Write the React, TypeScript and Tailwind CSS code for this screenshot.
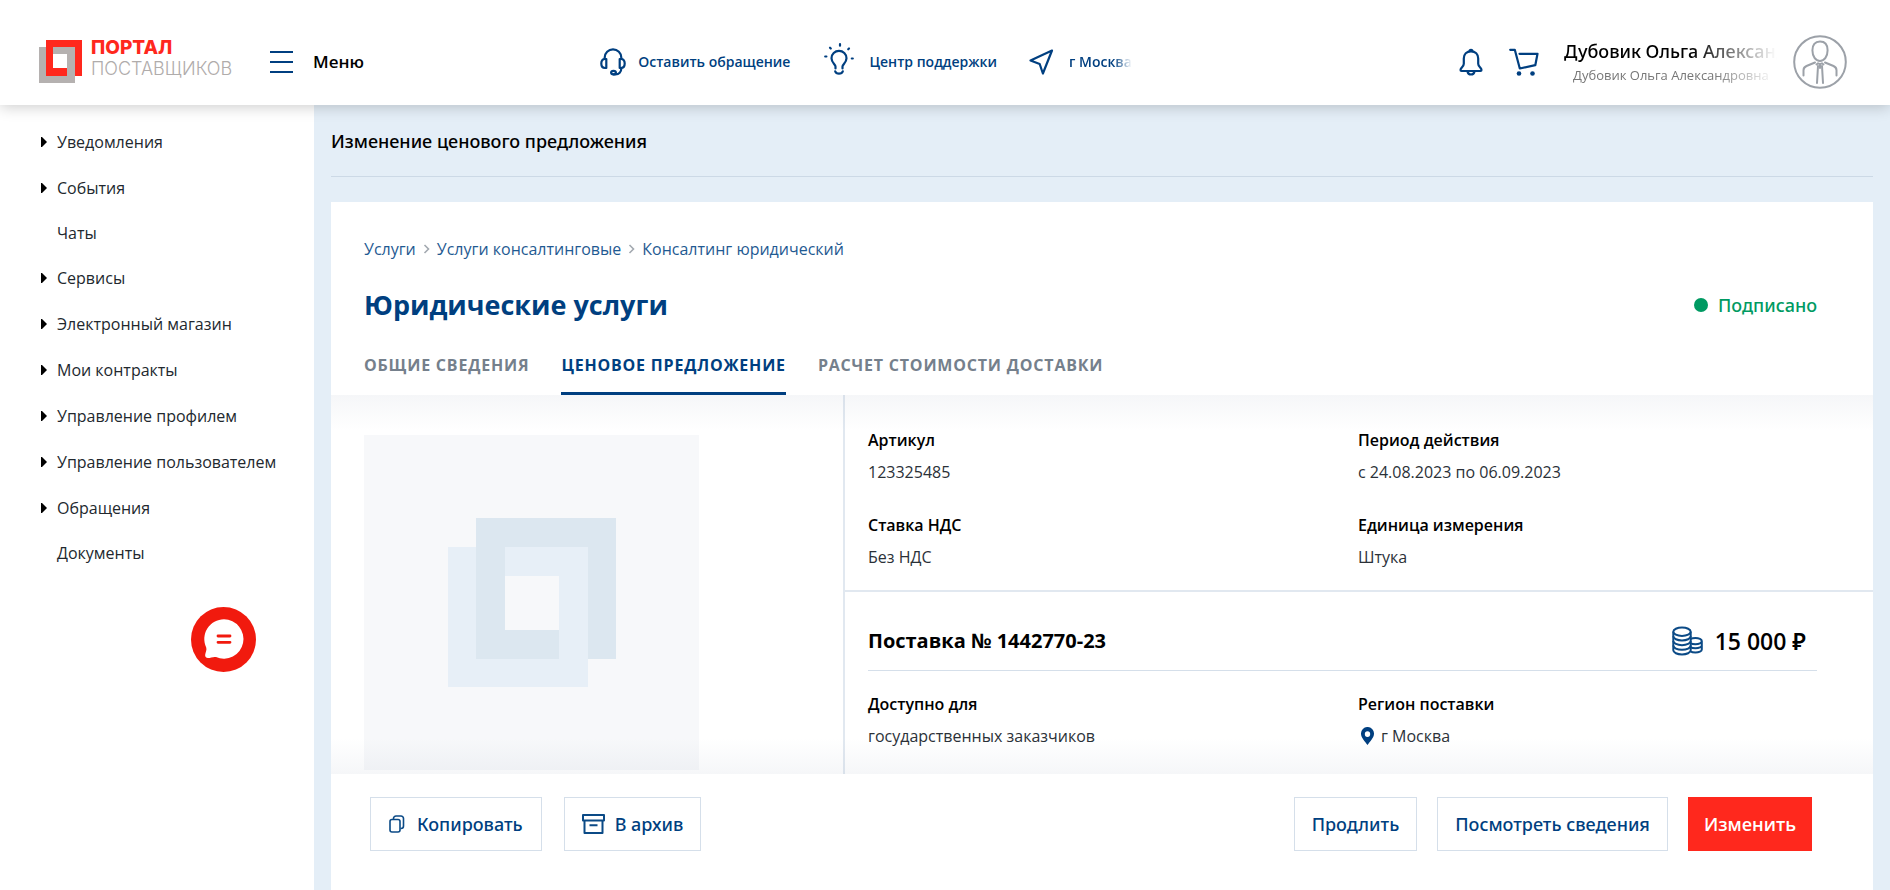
import React from "react";

const menuItems = [
  { label: "Уведомления", expandable: true },
  { label: "События", expandable: true },
  { label: "Чаты", expandable: false },
  { label: "Сервисы", expandable: true },
  { label: "Электронный магазин", expandable: true },
  { label: "Мои контракты", expandable: true },
  { label: "Управление профилем", expandable: true },
  { label: "Управление пользователем", expandable: true },
  { label: "Обращения", expandable: true },
  { label: "Документы", expandable: false },
];

function LogoMark() {
  return (
    <svg width="43" height="43" viewBox="0 0 43 43" aria-hidden="true" className="shrink-0">
      <path fill="#b5b1b0" fillRule="evenodd" d="M0 7h36v36H0zM14 14v14h14V14z" />
      <path fill="#ff281d" d="M7 0h36v36h-7V7H14v21h14v8H7z" />
    </svg>
  );
}

function HeadsetIcon() {
  return (
    <svg width="26" height="28" viewBox="0 0 26 28" fill="none" stroke="#003f80" strokeWidth="2.2" strokeLinecap="round" aria-hidden="true">
      <path d="M4.700 11V9.500a8.300 8.200 0 0 1 16.600 0V11" />
      <path d="M6.300 11v9H5c-2.200 0-3.700-1.700-3.700-4.400S2.800 11 5 11zM19.700 11v9H21c2.200 0 3.700-1.700 3.700-4.400S23.200 11 21 11z" strokeLinejoin="round" />
      <path d="M21.300 20.500c0 3.300-2.300 5.700-5.800 5.900h-2" />
      <ellipse cx="13.500" cy="24.600" rx="2.400" ry="1.800" />
    </svg>
  );
}

function BulbIcon() {
  return (
    <svg width="30" height="32" viewBox="0 0 30 32" fill="none" stroke="#003f80" strokeWidth="2.2" strokeLinecap="round" className="mb-1.5" aria-hidden="true">
      <path d="M11.500 25.500v-2c0-2-4-3.800-4-8.300a7.500 7.300 0 0 1 15 0c0 4.500-4 6.300-4 8.300v2" />
      <path d="M11.200 28.300c.6 1.700 2 2.300 3.800 2.300s3.200-.6 3.800-2.300" />
      <path d="M16 1.200v1.500M6 4.700l.8.800M25 5.500l-.8.800M1.200 13.500h1.200M27.800 15.500h1" />
    </svg>
  );
}

function LocationIcon() {
  return (
    <svg width="25" height="26" viewBox="0 0 25 26" fill="none" stroke="#003f80" strokeWidth="2.2" strokeLinejoin="round" aria-hidden="true">
      <path d="M23 1.500L1.500 11.500l9.200 3.500 3.200 9.500z" />
    </svg>
  );
}

function BellIcon() {
  return (
    <svg width="24" height="28" viewBox="0 0 24 28" fill="none" stroke="#003f80" strokeWidth="2.2" strokeLinejoin="round" aria-hidden="true">
      <path d="M12 3.300c-4.300 0-7.200 3-7.200 7.200v5.300c0 3-3.300 3.700-3.300 6.200 0 .6.300 1 1 1h19c.7 0 1-.4 1-1 0-2.500-3.300-3.200-3.300-6.200v-5.300c0-4.200-2.900-7.200-7.200-7.200z" />
      <path d="M10.500 3.300a1.500 1.500 0 0 1 3 0M8.500 23.500c.4 2 1.700 3 3.500 3s3.100-1 3.500-3" />
    </svg>
  );
}

function CartIcon() {
  return (
    <svg width="30" height="28" viewBox="0 0 30 28" fill="none" stroke="#003f80" strokeWidth="2.2" strokeLinecap="round" strokeLinejoin="round" aria-hidden="true">
      <path d="M1.200 1.800h4.600l5 18.700 15.500-3.300 2.200-11.400H10.500" />
      <circle cx="10" cy="25.500" r="2.300" fill="#003f80" stroke="none" />
      <circle cx="23.500" cy="25.500" r="2.300" fill="#003f80" stroke="none" />
    </svg>
  );
}

function AvatarIcon() {
  return (
    <svg width="54" height="54" viewBox="0 0 54 54" fill="none" stroke="#9ca1a8" strokeWidth="2" strokeLinecap="round" aria-hidden="true">
      <circle cx="27" cy="27" r="25.800" />
      <path d="M27 6.500c5 0 7.600 3.600 7.600 8.800 0 6-3.200 10.600-7.600 10.600s-7.600-4.600-7.600-10.600c0-5.200 2.600-8.800 7.600-8.800z" />
      <path d="M22 27.500l-8.500 3.500c-2 .9-3 2-3 4.300v5.200M32 27.500l8.500 3.500c2 .9 3 2 3 4.300v5.200" />
      <path d="M23.500 29.500l1.500-1.200 2 .9 2-.9 1.500 1.200M25 31l-1 17M29 31l1 17M27 30v3" />
    </svg>
  );
}

function CoinsIcon() {
  return (
    <svg width="31" height="30" viewBox="0 0 31 30" fill="none" stroke="#0b4a86" strokeWidth="2" aria-hidden="true">
      <ellipse cx="10" cy="5.700" rx="8.700" ry="4.200" />
      <path d="M1.300 5.700v18.600c0 2.300 3.900 4.200 8.700 4.200s8.700-1.900 8.700-4.200V5.700" />
      <path d="M1.300 10.300c0 2.300 3.900 4.200 8.700 4.200s8.700-1.900 8.700-4.200M1.300 15c0 2.300 3.900 4.200 8.700 4.200s8.700-1.900 8.700-4.200M1.300 19.600c0 2.300 3.900 4.200 8.700 4.200s8.700-1.900 8.700-4.200" />
      <path d="M18.700 13c1-.6 2.500-1 4.800-1 3.500 0 6.300 1.400 6.300 3.100s-2.800 3.100-6.300 3.100c-2.300 0-4-.4-4.800-1M29.800 15.100v8.300c0 1.700-2.800 3.100-6.300 3.100-2.200 0-4-.4-4.800-1M29.800 19.200c0 1.700-2.800 3.100-6.300 3.100-2.200 0-4-.4-4.800-1" />
    </svg>
  );
}

function CopyIcon() {
  return (
    <svg width="16" height="18" viewBox="0 0 16 18" fill="none" stroke="#0b4a86" strokeWidth="1.600" aria-hidden="true">
      <rect x="1" y="4.500" width="10" height="12.500" rx="2" />
      <path d="M4.500 4v-.5a2.500 2.500 0 0 1 2.500-2.500h5a2.500 2.500 0 0 1 2.500 2.500v7.500a2.500 2.500 0 0 1-2.500 2.500h-.5" />
    </svg>
  );
}

function ArchiveIcon() {
  return (
    <svg width="23" height="20" viewBox="0 0 23 20" fill="none" stroke="#0b4a86" strokeWidth="2" strokeLinejoin="round" aria-hidden="true">
      <path d="M1 1h21v5.500H1zM2.500 6.500V19h18V6.500M7.500 11.200h8" />
    </svg>
  );
}

function PinIcon() {
  return (
    <svg width="13" height="18" viewBox="0 0 13 18" aria-hidden="true">
      <path fill="#003f80" fillRule="evenodd" d="M6.500 0A6.300 6.500 0 0 1 13 6.700C13 10.500 9 14.500 6.500 18 4 14.500 0 10.500 0 6.700A6.300 6.500 0 0 1 6.500 0zm0 4.200a2.700 2.900 0 1 0 0 5.800 2.700 2.900 0 0 0 0-5.800z" />
    </svg>
  );
}

function Chevron() {
  return (
    <svg width="7" height="10" viewBox="0 0 7 10" fill="none" stroke="#a3a9b0" strokeWidth="1.600" aria-hidden="true">
      <path d="M1.500 1l4 4-4 4" />
    </svg>
  );
}

function Field({ label, children }: { label: string; children: React.ReactNode }) {
  return (
    <div>
      <dt className="text-base leading-6 font-semibold">{label}</dt>
      <dd className="mt-2 flex items-center text-base leading-6 text-[#2b3138]">{children}</dd>
    </div>
  );
}

const outlineButton =
  "flex h-[54px] items-center border border-[#d5dfea] bg-white px-[17px] font-['Noto_Sans',sans-serif] text-lg font-medium text-[#003f80]";

export default function App() {
  return (
    <div className="flex min-h-screen flex-col bg-white font-['Open_Sans','Noto_Sans',sans-serif] text-black">
      <header className="relative z-10 flex h-[105px] items-center bg-white pt-[18px] pr-[43px] pl-[39px] shadow-[0_2px_14px_rgba(0,0,0,0.2)]">
        <a href="#" className="flex w-[192px] gap-[9px]">
          <LogoMark />
          <span className="flex flex-col font-['Inter',sans-serif] whitespace-nowrap">
            <span className="text-[19px] leading-[16px] font-extrabold text-[#ff281d]">ПОРТАЛ</span>
            <span className="mt-1 text-lg leading-[18px] font-light text-[#b0acab]">ПОСТАВЩИКОВ</span>
          </span>
        </a>
        <button type="button" className="ml-[39px] flex items-center gap-5 text-[17px] font-semibold">
          <svg width="23" height="22" viewBox="0 0 23 22" aria-hidden="true">
            <path fill="#003f80" d="M0 0h23v2H0zM0 10h23v2H0zM0 20h23v2H0z" />
          </svg>
          Меню
        </button>
        <nav className="ml-[12.5vw] flex items-center text-sm font-semibold whitespace-nowrap text-[#003f80]">
          <a href="#" className="flex items-center gap-3"><HeadsetIcon />Оставить обращение</a>
          <a href="#" className="ml-[34px] flex items-center gap-[15px]"><BulbIcon />Центр поддержки</a>
          <a href="#" className="ml-8 flex items-center gap-[15px]">
            <LocationIcon />
            <span className="w-[63px] overflow-hidden mask-r-from-70% mask-r-to-100%">г Москва</span>
          </a>
        </nav>
        <div className="ml-auto flex items-center">
          <button type="button" aria-label="Уведомления"><BellIcon /></button>
          <button type="button" aria-label="Корзина" className="ml-[26px]"><CartIcon /></button>
          <div className="ml-[25px] w-[213px] overflow-hidden pt-0.5 whitespace-nowrap">
            <div className="font-['Noto_Sans',sans-serif] text-lg leading-6 font-medium mask-r-from-60% mask-r-to-100%">Дубовик Ольга Александровна</div>
            <div className="pl-[9px] text-[13px] leading-6 text-[#777] mask-r-from-70% mask-r-to-100%">Дубовик Ольга Александровна</div>
          </div>
          <button type="button" aria-label="Профиль" className="ml-4"><AvatarIcon /></button>
        </div>
      </header>

      <div className="flex flex-1">
        <aside className="relative w-[314px] shrink-0 pt-[14px]">
          <nav>
            <ul>
              {menuItems.map((item) => (
                <li key={item.label}>
                  <a
                    href="#"
                    className={`flex items-center pl-[41px] text-base whitespace-nowrap text-[#22282e] ${item.expandable ? "h-[46px]" : "h-11"}`}
                  >
                    <span className="w-4">
                      {item.expandable && (
                        <svg width="6" height="10" viewBox="0 0 6 10" aria-hidden="true">
                          <path d="M0 0h1l5 5-5 5H0z" />
                        </svg>
                      )}
                    </span>
                    {item.label}
                  </a>
                </li>
              ))}
            </ul>
          </nav>
          <button type="button" aria-label="Чат" className="absolute top-[502px] right-[58px]">
            <svg width="65" height="65" viewBox="0 0 65 65" aria-hidden="true">
              <circle cx="32.500" cy="32.500" r="32.500" fill="#f11a0e" />
              <path fill="#fff" d="M33 12.300a19.700 19.700 0 1 1-8 37.800c-2.300-.8-5.500 1-8 1-2 0-3.200-1.600-2.800-3.600.4-2.200 1.800-4.800 1-7A19.700 19.700 0 0 1 33 12.300z" />
              <path stroke="#f11a0e" strokeWidth="2.800" strokeLinecap="round" d="M27 29h12M27 35.300h12" />
            </svg>
          </button>
        </aside>

        <main className="flex min-w-0 flex-1 flex-col bg-[#e4eef7] px-[17px]">
          <h1 className="border-b border-[#ccd9e6] pt-[22px] pb-[21px] font-['Noto_Sans',sans-serif] text-lg leading-7 font-medium">Изменение ценового предложения</h1>
          <section className="mt-[25px] flex-1 bg-white">
            <nav className="flex items-center gap-[7px] px-[33px] pt-[35px] text-base leading-6 text-[#1f5a92]">
              <a href="#">Услуги</a>
              <Chevron />
              <a href="#">Услуги консалтинговые</a>
              <Chevron />
              <a href="#">Консалтинг юридический</a>
            </nav>
            <div className="mt-6 flex items-center justify-between pr-14 pl-[33px]">
              <h2 className="text-[27px] leading-10 font-bold text-[#003f80]">Юридические услуги</h2>
              <div className="flex items-center gap-2.5 font-['Noto_Sans',sans-serif] text-lg font-medium text-[#009a62]">
                <span className="size-3.5 rounded-full bg-[#009a62]" />
                Подписано
              </div>
            </div>
            <div role="tablist" className="mt-6 flex gap-8 px-[33px] text-base leading-6 font-bold tracking-wider whitespace-nowrap text-[#75808c]">
              <button type="button" role="tab" className="pt-1 pb-[18px]">ОБЩИЕ СВЕДЕНИЯ</button>
              <button type="button" role="tab" aria-selected="true" className="border-b-3 border-[#003f80] pt-1 pb-[15px] text-[#003f80]">ЦЕНОВОЕ ПРЕДЛОЖЕНИЕ</button>
              <button type="button" role="tab" className="pt-1 pb-[18px]">РАСЧЕТ СТОИМОСТИ ДОСТАВКИ</button>
            </div>

            <div className="relative flex">
              <div className="w-1/3 border-r-2 border-[#e1e8f0] pt-10 pb-1 pl-[33px]">
                <svg width="335" height="335" viewBox="0 0 335 335" role="img" aria-label="Нет изображения">
                  <path fill="#f7f8fa" d="M0 0h335v335H0z" />
                  <path fill="#e7eff7" d="M84 112h140v140H84z" />
                  <path fill="#dce7f0" d="M112 83h140v141h-28V112h-83v83h54v29h-83z" />
                  <path fill="#f7f8fa" d="M141 141h54v54h-54z" />
                </svg>
              </div>
              <div className="min-w-0 flex-1">
                <dl className="grid grid-cols-[490px_1fr] gap-y-[29px] border-b-2 border-[#e1e8f0] pt-[33px] pb-[21px] pl-[23px]">
                  <Field label="Артикул">123325485</Field>
                  <Field label="Период действия">с 24.08.2023 по 06.09.2023</Field>
                  <Field label="Ставка НДС">Без НДС</Field>
                  <Field label="Единица измерения">Штука</Field>
                </dl>
                <div className="pr-14 pl-[23px]">
                  <div className="flex h-[79px] items-center justify-between border-b border-[#d5dfea] pt-5 pr-[11px]">
                    <h3 className="text-xl font-bold">Поставка № 1442770-23</h3>
                    <div className="flex items-center gap-3 text-[23px] font-semibold">
                      <CoinsIcon />
                      15 000 ₽
                    </div>
                  </div>
                  <dl className="grid grid-cols-[490px_1fr] pt-[21px] pb-6">
                    <Field label="Доступно для">государственных заказчиков</Field>
                    <Field label="Регион поставки">
                      <span className="flex items-center gap-[7px] pl-[3px]"><PinIcon />г Москва</span>
                    </Field>
                  </dl>
                </div>
              </div>
              <div className="pointer-events-none absolute inset-x-0 top-0 h-9 bg-linear-to-b from-[#5f7191]/6 to-transparent" />
              <div className="pointer-events-none absolute inset-x-0 bottom-0 h-9 bg-linear-to-t from-[#5f7191]/6 to-transparent" />
            </div>

            <div className="flex items-center justify-between pt-[23px] pr-[61px] pb-8 pl-[39px]">
              <div className="flex gap-[22px]">
                <button type="button" className={outlineButton}>
                  <span className="flex items-center gap-3 px-px"><CopyIcon />Копировать</span>
                </button>
                <button type="button" className={outlineButton}>
                  <span className="flex items-center gap-2.5"><ArchiveIcon />В архив</span>
                </button>
              </div>
              <div className="flex gap-5">
                <button type="button" className={outlineButton}>Продлить</button>
                <button type="button" className={outlineButton}>Посмотреть сведения</button>
                <button type="button" className="h-[54px] bg-[#ff281d] px-4 text-lg font-semibold text-white">Изменить</button>
              </div>
            </div>
          </section>
        </main>
      </div>
    </div>
  );
}
